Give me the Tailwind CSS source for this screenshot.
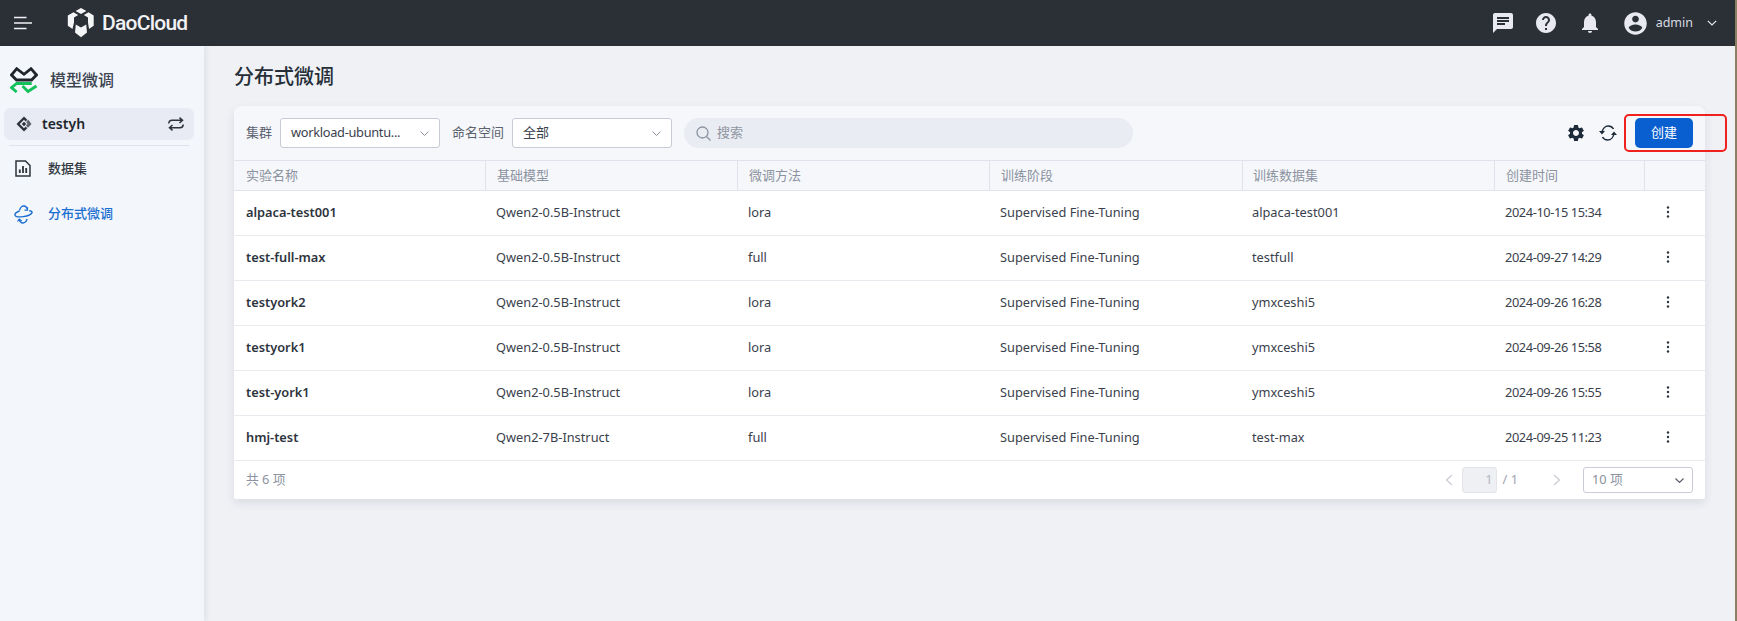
<!DOCTYPE html>
<html lang="zh-CN">
<head>
  <meta charset="UTF-8" />
  <title>分布式微调 | DaoCloud</title>
  <script src="https://cdn.jsdelivr.net/npm/@tailwindcss/browser@4"></script>
</head>
<body class="h-[621px] overflow-hidden flex bg-[#eff1f5] text-[12.8px] text-[#3a414c] font-['Noto_Sans','Noto_Sans_CJK_SC',sans-serif]">

  <div class="w-[1735px] h-full flex flex-col relative">
    <!-- Top bar -->
    <header class="h-[46px] shrink-0 bg-[#2b2f36] flex items-center text-[#e8eaf0]">
      <svg class="ml-[14px] w-[18px] h-[14px]" viewBox="0 0 18 14" fill="none" stroke="#f1f2f5" stroke-width="1.6"><path d="M0 1.5h12.5M0 7h18M0 12.5h12.5"/></svg>
      <svg class="ml-[35px] w-[28px] h-[30px]" viewBox="0 0 28 30" fill="#f4f5f7">
        <path d="M14 0l5.400 3-5.400 3-5.400-3z"/>
        <path d="M6.500 4.200l4.700 2.700-4.200 2.500v5.200l-1.500 6.500-4.700-3.400V7.400z"/>
        <path d="M21.500 4.200l5.200 3.200v10.300l-4.700 3.400-1-6.500V9.400l-4.200-2.500z"/>
        <path d="M8.800 16.500l5.200 3 5.200-3 .8 8-6 4.700-6-4.700z"/>
      </svg>
      <span class="ml-[7px] text-[21px] leading-none font-medium tracking-[-0.75px] text-[#f1f2f5] font-['Roboto',sans-serif]">DaoCloud</span>

      <div class="ml-auto flex items-center">
        <svg class="w-[24px] h-[24px]" viewBox="0 0 24 24" fill="#e8eaf0"><path d="M20 2H4c-1.100 0-2 .9-2 2v18l4-4h14c1.100 0 2-.9 2-2V4c0-1.100-.9-2-2-2zM6 9h12v2H6V9zm8 5H6v-2h8v2zm4-6H6V6h12v2z"/></svg>
        <svg class="ml-[19px] w-[24px] h-[24px]" viewBox="0 0 24 24" fill="#e8eaf0"><path d="M12 2C6.480 2 2 6.480 2 12s4.480 10 10 10 10-4.480 10-10S17.520 2 12 2zm1 17h-2v-2h2v2zm2.070-7.750l-.9.92C13.450 12.900 13 13.500 13 15h-2v-.5c0-1.100.45-2.100 1.170-2.830l1.240-1.260c.37-.36.59-.86.59-1.410 0-1.100-.9-2-2-2s-2 .9-2 2H8c0-2.210 1.790-4 4-4s4 1.790 4 4c0 .88-.36 1.680-.93 2.250z"/></svg>
        <svg class="ml-[20px] w-[24px] h-[24px]" viewBox="0 0 24 24" fill="#e8eaf0"><path d="M12 22c1.100 0 2-.9 2-2h-4c0 1.100.9 2 2 2zm6-6v-5c0-3.070-1.630-5.640-4.500-6.320V4c0-.83-.67-1.500-1.500-1.500s-1.500.67-1.500 1.500v.68C7.640 5.360 6 7.920 6 11v5l-2 2v1h16v-1l-2-2z"/></svg>
        <svg class="ml-[20px] w-[27px] h-[27px]" viewBox="0 0 24 24" fill="#e8eaf0"><path d="M12 2C6.480 2 2 6.480 2 12s4.480 10 10 10 10-4.480 10-10S17.520 2 12 2zm0 3c1.660 0 3 1.340 3 3s-1.340 3-3 3-3-1.340-3-3 1.340-3 3-3zm0 14.200c-2.500 0-4.710-1.280-6-3.220.03-1.990 4-3.080 6-3.080 1.990 0 5.970 1.090 6 3.080-1.290 1.940-3.500 3.220-6 3.220z"/></svg>
        <span class="ml-[7px] text-[12.5px] text-[#d8dbe2]">admin</span>
        <svg class="ml-[14px] mr-[18px] w-[10px] h-[6px]" viewBox="0 0 10 6" fill="none" stroke="#e8eaf0" stroke-width="1.200"><path d="M.8.8L5 5l4.200-4.200"/></svg>
      </div>
    </header>

    <div class="flex-1 flex min-h-0">
      <!-- Sidebar -->
      <aside class="w-[204px] shrink-0 bg-[#f3f6fb] shadow-[2px_0_6px_rgba(30,40,70,0.08)] pl-[4px] pr-[10px] z-10">
        <div class="h-[62px] flex items-center pl-[6px] pt-[6px]">
          <svg class="w-[28px] h-[26px]" viewBox="0 0 28 26" fill="none" stroke-width="2.800" stroke-linejoin="miter">
            <path d="M1.500 8l5.200-6.300L14 7.300l7-5.600L26.500 8l-5 5H6.500z" stroke="#20252c"/>
            <path d="M21.700 16.500H6.700L1.500 20.700 6.700 25" stroke="#13c15a"/>
            <path d="M12.500 19l5.500 5.500 8.500-5.500" stroke="#13c15a"/>
          </svg>
          <span class="ml-[12px] text-[16px] font-medium text-[#3b4450]">模型微调</span>
        </div>
        <div class="h-[32px] rounded-[7px] bg-[#e8ebf3] flex items-center pl-[12px] pr-[10px]">
          <svg class="w-[16px] h-[16px]" viewBox="0 0 16 16" fill="#2d343d"><path d="M8 .5l3.300 3.300L9.700 5.400 8 3.700 3.700 8 8 12.300l1.700-1.700 1.600 1.600L8 15.500.5 8z"/><path d="M10.200 5.900L12.300 3.800l3.200 4.200-3.500 3.700-2.100-2.100L11.600 8z" opacity=".75"/><rect x="6.400" y="6.400" width="3.200" height="3.200" transform="rotate(45 8 8)"/></svg>
          <span class="ml-[10px] -mt-[2px] text-[14px] font-semibold text-[#20252c]">testyh</span>
          <svg class="ml-auto w-[16px] h-[14px]" viewBox="0 0 16 14" fill="none" stroke="#2d343d" stroke-width="1.500"><path d="M.8 6.500C.8 4.500 2 3.300 4 3.300h10.500M11.500 .6l3 2.700-3 2.700M15.200 7.500c0 2-1.200 3.200-3.200 3.200H1.500M4.500 8l-3 2.700 3 2.700"/></svg>
        </div>
        <div class="mx-[5px] mt-[5px] border-t border-[#dfe3ec]"></div>
        <nav>
          <a class="h-[45px] flex items-center pl-[11px] text-[#333a44]">
            <svg class="w-[16px] h-[17px]" viewBox="0 0 16 17" fill="none" stroke="#2d343d" stroke-width="1.500"><path d="M1 1h9.500L15 5.500V16H1z"/><path d="M4.800 13V9.500M8 13V6M11.200 13V8" stroke-width="1.800"/></svg>
            <span class="ml-[17px] text-[13px] font-medium">数据集</span>
          </a>
          <a class="h-[46px] flex items-center pl-[10px] text-[#1a6fd1]">
            <svg class="w-[19px] h-[19px]" viewBox="0 0 19 19" fill="none" stroke="#1a6fd1" stroke-width="1.400"><path d="M5.500 6C2.800 7 .8 8.500 1 9.800c.3 1.700 4 2.400 8.300 1.800s8-2.400 8.700-4c.3-1-.8-1.700-2.700-1.900"/><path d="M5.500 5.500C6 2.800 8 .8 10 1c1.800.2 3 1.500 3.500 3.300"/><path d="M13 14c-.5 2.600-2.500 4.300-4.500 4-1.700-.3-2.900-1.500-3.300-3.300"/><path d="M13.500 2.200v3h-3M3.500 16.500l1.700-2.300 2.500 1.800" stroke-width="1.200"/></svg>
            <span class="ml-[15px] text-[13px] font-medium">分布式微调</span>
          </a>
        </nav>
      </aside>

      <!-- Content -->
      <main class="flex-1 min-w-0 pl-[30px] pr-[30px]">
        <h1 class="h-[60px] flex items-center pt-[1px] text-[20px] font-medium text-[#262e38]">分布式微调</h1>

        <section class="w-[1471px] rounded-t-[8px] rounded-b-[2px] bg-white shadow-[0_4px_10px_rgba(30,40,70,0.1)]">
          <!-- Toolbar -->
          <div class="h-[54px] rounded-t-[8px] bg-[#f6f7fa] flex items-center pl-[12px]">
            <span class="text-[13px] text-[#5a6270]">集群</span>
            <div class="ml-[8px] w-[160px] h-[30px] rounded-[3px] border border-[#c8ccd8] bg-white flex items-center pl-[10px] pr-[10px]">
              <span class="tracking-[-0.3px]">workload-ubuntu...</span>
              <svg class="ml-auto w-[9px] h-[5px]" viewBox="0 0 9 5" fill="none" stroke="#8b92a0"><path d="M.5.5l4 4 4-4"/></svg>
            </div>
            <span class="ml-[12px] text-[13px] text-[#5a6270]">命名空间</span>
            <div class="ml-[8px] w-[160px] h-[30px] rounded-[3px] border border-[#c8ccd8] bg-white flex items-center pl-[10px] pr-[10px]">
              <span class="text-[13px]">全部</span>
              <svg class="ml-auto w-[9px] h-[5px]" viewBox="0 0 9 5" fill="none" stroke="#8b92a0"><path d="M.5.5l4 4 4-4"/></svg>
            </div>
            <div class="ml-[12px] w-[449px] h-[30px] rounded-full bg-[#e9ecf2] flex items-center pl-[12px] text-[13px] text-[#9096a3]">
              <svg class="w-[15px] h-[15px]" viewBox="0 0 15 15" fill="none" stroke="#8b92a0" stroke-width="1.300"><circle cx="6.500" cy="6.500" r="5.500"/><path d="M10.500 10.500l4 4"/></svg>
              <span class="ml-[6px]">搜索</span>
            </div>
            <svg class="ml-auto w-[20px] h-[20px]" viewBox="0 0 24 24" fill="#1d2a3a"><path d="M19.140 12.940c.04-.3.06-.61.06-.94 0-.32-.02-.64-.07-.94l2.030-1.580c.18-.14.23-.41.12-.61l-1.920-3.320c-.12-.22-.37-.29-.59-.22l-2.390.96c-.5-.38-1.030-.7-1.620-.94l-.36-2.540c-.04-.24-.24-.41-.48-.41h-3.840c-.24 0-.43.17-.47.41l-.36 2.540c-.59.24-1.130.57-1.620.94l-2.390-.96c-.22-.08-.47 0-.59.22L2.740 8.870c-.12.21-.08.47.12.61l2.030 1.580c-.05.3-.09.63-.09.94s.02.64.07.94l-2.030 1.580c-.18.14-.23.41-.12.61l1.920 3.320c.12.22.37.29.59.22l2.390-.96c.5.38 1.030.7 1.620.94l.36 2.540c.05.24.24.41.48.41h3.840c.24 0 .44-.17.47-.41l.36-2.540c.59-.24 1.130-.56 1.620-.94l2.390.96c.22.08.47 0 .59-.22l1.920-3.320c.12-.22.07-.47-.12-.61l-2.010-1.580zM12 15.600c-1.980 0-3.600-1.620-3.600-3.600s1.620-3.600 3.600-3.600 3.600 1.620 3.600 3.600-1.620 3.600-3.600 3.600z"/></svg>
            <svg class="ml-[13px] w-[18px] h-[16px]" viewBox="0 0 18 16" fill="none" stroke="#1d2a3a" stroke-width="1.500"><path d="M3 7.500C3.500 4 6 1 9.300 1c2.300 0 4.200 1.200 5.200 3"/><path d="M15 8.500c-.5 3.500-3 6.500-6.300 6.500-2.300 0-4.200-1.200-5.200-3"/><path d="M0 6h6L3 9.500zM12 10h6l-3-3.500z" fill="#1d2a3a" stroke="none"/></svg>
            <button class="ml-[18px] mr-[12px] w-[58px] h-[30px] rounded-[5px] bg-[#0a5fd0] text-[13px] text-white">创建</button>
          </div>

          <!-- Table head -->
          <div class="grid grid-cols-[251px_252px_252px_253px_252px_150px_61px] h-[31px] items-stretch bg-[#f6f7fa] border-y border-[#e0e3eb] text-[13px] text-[#8b92a0]">
            <div class="flex items-center pl-[12px]">实验名称</div>
            <div class="flex items-center pl-[11px] border-l border-[#e0e3eb]">基础模型</div>
            <div class="flex items-center pl-[11px] border-l border-[#e0e3eb]">微调方法</div>
            <div class="flex items-center pl-[11px] border-l border-[#e0e3eb]">训练阶段</div>
            <div class="flex items-center pl-[10px] border-l border-[#e0e3eb]">训练数据集</div>
            <div class="flex items-center pl-[11px] border-l border-[#e0e3eb]">创建时间</div>
            <div class="border-l border-[#e0e3eb]"></div>
          </div>

          <!-- Rows -->
          <div class="grid grid-cols-[251px_252px_252px_253px_252px_150px_61px] h-[45px] items-center border-b border-[#e8eaf0]">
            <div class="pl-[12px] font-semibold text-[#2d343d]">alpaca-test001</div><div class="pl-[11px]">Qwen2-0.5B-Instruct</div><div class="pl-[11px]">lora</div><div class="pl-[11px]">Supervised Fine-Tuning</div><div class="pl-[10px]">alpaca-test001</div><div class="pl-[11px] tracking-[-0.4px]">2024-10-15 15:34</div>
            <svg class="justify-self-start ml-[22px] w-[4px] h-[12px] -mt-[2px]" viewBox="0 0 4 12" fill="#2d343d"><circle cx="2" cy="1.500" r="1.200"/><circle cx="2" cy="6" r="1.200"/><circle cx="2" cy="10.500" r="1.200"/></svg>
          </div>
          <div class="grid grid-cols-[251px_252px_252px_253px_252px_150px_61px] h-[45px] items-center border-b border-[#e8eaf0]">
            <div class="pl-[12px] font-semibold text-[#2d343d]">test-full-max</div><div class="pl-[11px]">Qwen2-0.5B-Instruct</div><div class="pl-[11px]">full</div><div class="pl-[11px]">Supervised Fine-Tuning</div><div class="pl-[10px]">testfull</div><div class="pl-[11px] tracking-[-0.4px]">2024-09-27 14:29</div>
            <svg class="justify-self-start ml-[22px] w-[4px] h-[12px] -mt-[2px]" viewBox="0 0 4 12" fill="#2d343d"><circle cx="2" cy="1.500" r="1.200"/><circle cx="2" cy="6" r="1.200"/><circle cx="2" cy="10.500" r="1.200"/></svg>
          </div>
          <div class="grid grid-cols-[251px_252px_252px_253px_252px_150px_61px] h-[45px] items-center border-b border-[#e8eaf0]">
            <div class="pl-[12px] font-semibold text-[#2d343d]">testyork2</div><div class="pl-[11px]">Qwen2-0.5B-Instruct</div><div class="pl-[11px]">lora</div><div class="pl-[11px]">Supervised Fine-Tuning</div><div class="pl-[10px]">ymxceshi5</div><div class="pl-[11px] tracking-[-0.4px]">2024-09-26 16:28</div>
            <svg class="justify-self-start ml-[22px] w-[4px] h-[12px] -mt-[2px]" viewBox="0 0 4 12" fill="#2d343d"><circle cx="2" cy="1.500" r="1.200"/><circle cx="2" cy="6" r="1.200"/><circle cx="2" cy="10.500" r="1.200"/></svg>
          </div>
          <div class="grid grid-cols-[251px_252px_252px_253px_252px_150px_61px] h-[45px] items-center border-b border-[#e8eaf0]">
            <div class="pl-[12px] font-semibold text-[#2d343d]">testyork1</div><div class="pl-[11px]">Qwen2-0.5B-Instruct</div><div class="pl-[11px]">lora</div><div class="pl-[11px]">Supervised Fine-Tuning</div><div class="pl-[10px]">ymxceshi5</div><div class="pl-[11px] tracking-[-0.4px]">2024-09-26 15:58</div>
            <svg class="justify-self-start ml-[22px] w-[4px] h-[12px] -mt-[2px]" viewBox="0 0 4 12" fill="#2d343d"><circle cx="2" cy="1.500" r="1.200"/><circle cx="2" cy="6" r="1.200"/><circle cx="2" cy="10.500" r="1.200"/></svg>
          </div>
          <div class="grid grid-cols-[251px_252px_252px_253px_252px_150px_61px] h-[45px] items-center border-b border-[#e8eaf0]">
            <div class="pl-[12px] font-semibold text-[#2d343d]">test-york1</div><div class="pl-[11px]">Qwen2-0.5B-Instruct</div><div class="pl-[11px]">lora</div><div class="pl-[11px]">Supervised Fine-Tuning</div><div class="pl-[10px]">ymxceshi5</div><div class="pl-[11px] tracking-[-0.4px]">2024-09-26 15:55</div>
            <svg class="justify-self-start ml-[22px] w-[4px] h-[12px] -mt-[2px]" viewBox="0 0 4 12" fill="#2d343d"><circle cx="2" cy="1.500" r="1.200"/><circle cx="2" cy="6" r="1.200"/><circle cx="2" cy="10.500" r="1.200"/></svg>
          </div>
          <div class="grid grid-cols-[251px_252px_252px_253px_252px_150px_61px] h-[45px] items-center border-b border-[#e8eaf0]">
            <div class="pl-[12px] font-semibold text-[#2d343d]">hmj-test</div><div class="pl-[11px]">Qwen2-7B-Instruct</div><div class="pl-[11px]">full</div><div class="pl-[11px]">Supervised Fine-Tuning</div><div class="pl-[10px]">test-max</div><div class="pl-[11px] tracking-[-0.4px]">2024-09-25 11:23</div>
            <svg class="justify-self-start ml-[22px] w-[4px] h-[12px] -mt-[2px]" viewBox="0 0 4 12" fill="#2d343d"><circle cx="2" cy="1.500" r="1.200"/><circle cx="2" cy="6" r="1.200"/><circle cx="2" cy="10.500" r="1.200"/></svg>
          </div>

          <!-- Pagination -->
          <div class="h-[38px] flex items-center pl-[12px] pr-[12px] text-[#8b92a0]">
            <span>共 6 项</span>
            <svg class="ml-auto w-[8px] h-[12px]" viewBox="0 0 8 12" fill="none" stroke="#c9ccd4" stroke-width="1.200"><path d="M7 1L1.500 6 7 11"/></svg>
            <div class="ml-[9px] w-[35px] h-[26px] rounded-[3px] bg-[#eff0f3] border border-[#e3e5ea] flex items-center justify-end pr-[3px] text-[#b4b8c2]">1</div>
            <span class="ml-[6px] text-[#a0a5b0]">/ 1</span>
            <svg class="ml-[35px] w-[8px] h-[12px]" viewBox="0 0 8 12" fill="none" stroke="#c9ccd4" stroke-width="1.200"><path d="M1 1l5.500 5L1 11"/></svg>
            <div class="ml-[22px] w-[110px] h-[26px] rounded-[3px] border border-[#c8ccd8] flex items-center pl-[8px] pr-[8px]">
              <span>10 项</span>
              <svg class="ml-auto w-[9px] h-[5px]" viewBox="0 0 9 5" fill="none" stroke="#555c68" stroke-width="1.100"><path d="M.5.5l4 4 4-4"/></svg>
            </div>
          </div>
        </section>
      </main>
    </div>

    <!-- Red annotation round the create button -->
    <div class="absolute left-[1624px] top-[114px] w-[103px] h-[38px] rounded-[5px] border-[2.5px] border-[#f0201c]"></div>
  </div>

  <!-- Edge of the window behind the screenshot -->
  <div class="w-[2px] h-full bg-[#8a7f62]"></div>

</body>
</html>
